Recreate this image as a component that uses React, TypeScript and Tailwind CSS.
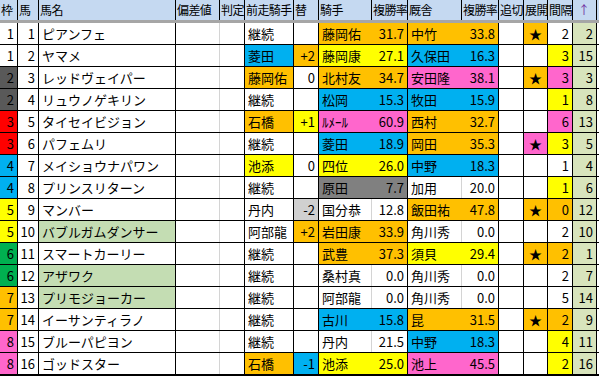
const fill: Record<string, string> = {
  W: "bg-white",
  O: "bg-[#FFC000]",
  Y: "bg-[#FFFF00]",
  B: "bg-[#00B0F0]",
  P: "bg-[#FF66CC]",
  G: "bg-[#808080]",
  L: "bg-[#D0D0D0]",
};

// light separators disappear under a fill, like Excel gridlines
const softLine: Record<string, string> = {
  W: "border-r-[#D4D4D4]",
  O: "border-r-[#FFC000]",
  Y: "border-r-[#FFFF00]",
  B: "border-r-[#00B0F0]",
  P: "border-r-[#FF66CC]",
  G: "border-r-[#808080]",
  L: "border-r-[#D0D0D0]",
};

const waku: Record<number, string> = {
  1: "bg-white",
  2: "bg-[#595959]",
  3: "bg-[#FF0000]",
  4: "bg-[#00B0F0]",
  5: "bg-[#FFFF00]",
  6: "bg-[#00B050]",
  7: "bg-[#FFC000]",
  8: "bg-[#FF66CC]",
};

type Row = [number, number, string, number, string, string, string, string, string, string, string, string, string, string, string, string, string, string, string];

const rows: Row[] = [
  [1, 1, "ピアンフェ", 0, "継続", "W", "", "W", "藤岡佑", "O", "31.7", "中竹", "O", "33.8", "★", "O", "2", "W", "2"],
  [1, 2, "ヤマメ", 0, "菱田", "B", "+2", "O", "藤岡康", "Y", "27.1", "久保田", "B", "16.3", "", "W", "3", "Y", "15"],
  [2, 3, "レッドヴェイパー", 0, "藤岡佑", "O", "0", "W", "北村友", "O", "34.7", "安田隆", "P", "38.1", "★", "O", "3", "P", "3"],
  [2, 4, "リュウノゲキリン", 0, "継続", "W", "", "W", "松岡", "B", "15.3", "牧田", "B", "15.9", "", "W", "1", "Y", "8"],
  [3, 5, "タイセイビジョン", 0, "石橋", "O", "+1", "Y", "ﾙﾒｰﾙ", "P", "60.9", "西村", "O", "32.7", "", "W", "6", "P", "13"],
  [3, 6, "パフェムリ", 0, "継続", "W", "", "W", "菱田", "B", "18.9", "岡田", "O", "35.3", "★", "P", "3", "Y", "5"],
  [4, 7, "メイショウナパワン", 0, "池添", "Y", "0", "W", "四位", "Y", "26.0", "中野", "B", "18.3", "", "W", "1", "W", "4"],
  [4, 8, "プリンスリターン", 0, "継続", "W", "", "W", "原田", "G", "7.7", "加用", "W", "20.0", "", "W", "1", "Y", "6"],
  [5, 9, "マンバー", 0, "丹内", "W", "-2", "L", "国分恭", "W", "12.8", "飯田祐", "O", "47.8", "★", "O", "0", "O", "12"],
  [5, 10, "バブルガムダンサー", 1, "阿部龍", "W", "+2", "O", "岩田康", "O", "33.9", "角川秀", "W", "0.0", "", "W", "2", "W", "10"],
  [6, 11, "スマートカーリー", 0, "継続", "W", "", "W", "武豊", "O", "37.3", "須貝", "Y", "29.4", "★", "O", "2", "O", "1"],
  [6, 12, "アザワク", 1, "継続", "W", "", "W", "桑村真", "W", "0.0", "角川秀", "W", "0.0", "", "W", "2", "W", "7"],
  [7, 13, "プリモジョーカー", 1, "継続", "W", "", "W", "阿部龍", "W", "0.0", "角川秀", "W", "0.0", "", "W", "5", "W", "14"],
  [7, 14, "イーサンティラノ", 0, "継続", "W", "", "W", "古川", "B", "15.8", "昆", "O", "31.5", "★", "O", "2", "O", "9"],
  [8, 15, "ブルーパピヨン", 0, "継続", "W", "", "W", "丹内", "W", "21.5", "中野", "B", "18.3", "", "W", "4", "Y", "11"],
  [8, 16, "ゴッドスター", 0, "石橋", "O", "-1", "B", "池添", "Y", "25.0", "池上", "P", "45.5", "", "W", "2", "Y", "16"],
];

const hard = "border-r border-r-black";

function Cell({ w, c, line, align = "left", children }: { w: string; c: string; line: string; align?: "left" | "right" | "center"; children?: React.ReactNode }) {
  const a = align === "right" ? "justify-end pr-[3px]" : align === "center" ? "justify-center" : "justify-start pl-[3px]";
  return <div className={`${w} ${c} ${line} h-full flex items-center shrink-0 whitespace-nowrap overflow-hidden ${a}`}>{children}</div>;
}

const heads: [string, string][] = [
  ["枠", "w-[18px]"],
  ["馬", "w-[21px]"],
  ["馬名", "w-[137px]"],
  ["偏差値", "w-[44px]"],
  ["判定", "w-[25px]"],
  ["前走騎手", "w-[49px]"],
  ["替", "w-[25px]"],
  ["騎手", "w-[53px]"],
  ["複勝率", "w-[36px]"],
  ["厩舎", "w-[54px]"],
  ["複勝率", "w-[37px]"],
  ["追切", "w-[25px]"],
  ["展開", "w-[24px]"],
  ["間隔", "w-[25px]"],
  ["↑", "w-[24px]"],
];

export default function App() {
  return (
    <div className="w-[599px] h-[376px] bg-white overflow-hidden font-['Noto_Sans_CJK_JP',sans-serif] text-[13px] leading-none text-black">
      <div className="flex h-[23px] border-b-[3px] border-b-[#A6A6A6] bg-[#C5D9F1] text-[12px] tracking-[-0.6px]">
        {heads.map(([t, w], i) => (
          <div key={i} className={`${w} ${hard} h-full flex items-center pl-[1px] shrink-0 whitespace-nowrap overflow-hidden ${t === "↑" ? "text-[#7030A0] pl-[5px]" : ""}`}>
            {t}
          </div>
        ))}
      </div>
      {rows.map((r, i) => {
        const [wk, num, name, green, zen, zenC, kae, kaeC, jk, jkC, jr, tr, trC, trr, ten, tenC, kan, kanC, up] = r;
        const last = i === rows.length - 1;
        return (
          <div key={i} className={`flex ${last ? "h-[23px] border-b-2" : "h-[22px] border-b"} border-b-black`}>
            <Cell w="w-[18px]" c={waku[wk]} line={hard} align="right">{wk}</Cell>
            <Cell w="w-[21px]" c="bg-white" line={hard} align="right">{num}</Cell>
            <Cell w="w-[137px]" c={green ? "bg-[#C4DDB3]" : "bg-white"} line={hard}>{name}</Cell>
            <Cell w="w-[44px]" c="bg-white" line="border-r border-r-[#D4D4D4]" />
            <Cell w="w-[25px]" c="bg-white" line={hard} />
            <Cell w="w-[49px]" c={fill[zenC]} line={hard}>{zen}</Cell>
            <Cell w="w-[25px]" c={fill[kaeC]} line={hard} align="right">{kae}</Cell>
            <Cell w="w-[53px]" c={fill[jkC]} line={`border-r ${softLine[jkC]}`}>{jk}</Cell>
            <Cell w="w-[36px]" c={fill[jkC]} line={hard} align="right">{jr}</Cell>
            <Cell w="w-[54px]" c={fill[trC]} line={`border-r ${softLine[trC]}`}>{tr}</Cell>
            <Cell w="w-[37px]" c={fill[trC]} line={hard} align="right">{trr}</Cell>
            <Cell w="w-[25px]" c="bg-white" line={hard} />
            <Cell w="w-[24px]" c={fill[tenC]} line={hard} align="center">{ten}</Cell>
            <Cell w="w-[25px]" c={fill[kanC]} line={hard} align="right">{kan}</Cell>
            <Cell w="w-[24px]" c="bg-[#D8E4BC]" line={hard} align="right">{up}</Cell>
          </div>
        );
      })}
    </div>
  );
}
